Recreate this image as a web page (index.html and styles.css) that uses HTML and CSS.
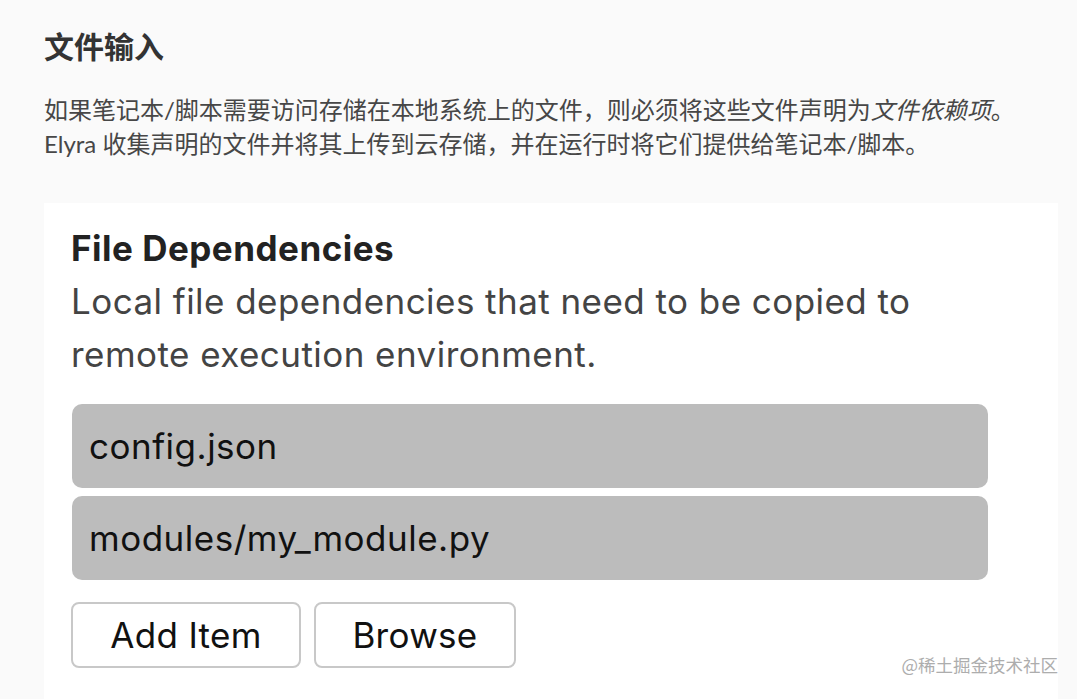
FILE: index.html
```html
<!DOCTYPE html>
<html lang="zh-CN">
<head>
<meta charset="utf-8">
<title>文件输入</title>
<link rel="stylesheet" href="styles.css">
</head>
<body>
<main class="page">
  <h2 class="section-title">文件输入</h2>
  <p class="section-text">如果笔记本/脚本需要访问存储在本地系统上的文件，则必须将这些文件声明为<em>文件依赖项</em>。<br>Elyra 收集声明的文件并将其上传到云存储，并在运行时将它们提供给笔记本/脚本。</p>
  <section class="card">
    <h3 class="card-title">File Dependencies</h3>
    <p class="card-desc">Local file dependencies that need to be copied to remote execution environment.</p>
    <ul class="dep-list">
      <li class="dep-item">config.json</li>
      <li class="dep-item">modules/my_module.py</li>
    </ul>
    <div class="actions">
      <button class="btn btn-add" type="button">Add Item</button>
      <button class="btn btn-browse" type="button">Browse</button>
    </div>
  </section>
  <span class="watermark">@稀土掘金技术社区</span>
</main>
</body>
</html>
```

FILE: styles.css
```css
* { box-sizing: border-box; }

html, body {
  margin: 0;
  padding: 0;
  height: 100%;
  overflow: hidden;
}

body {
  background: #fafafa;
}

.page {
  position: relative;
  min-height: 100vh;
  display: flex;
  flex-direction: column;
  padding: 27px 19px 0 44px;
}

.section-title {
  margin: 0;
  font-family: Lato, "Noto Sans CJK SC", sans-serif;
  font-weight: 700;
  font-size: 30px;
  line-height: 38px;
  color: #333333;
}

.section-text {
  margin: 28px 0 0;
  font-family: Lato, "Noto Sans CJK SC", sans-serif;
  font-size: 24px;
  line-height: 34px;
  color: #474747;
}

.section-text em {
  font-style: italic;
}

.card {
  flex: 1;
  margin-top: 42px;
  background: #ffffff;
  padding: 24px 70px 0 27px;
  font-family: Inter, "Liberation Sans", sans-serif;
}

.card-title {
  margin: 0;
  font-size: 35px;
  line-height: 42px;
  font-weight: 700;
  letter-spacing: 0.5px;
  color: #222222;
}

.card-desc {
  margin: 6px 0 0;
  font-size: 35px;
  line-height: 53px;
  letter-spacing: 0.45px;
  color: #444444;
}

.dep-list {
  list-style: none;
  margin: 23px 0 0 1px;
  padding: 0;
  display: flex;
  flex-direction: column;
  gap: 8px;
}

.dep-item {
  height: 84px;
  line-height: 84px;
  padding-left: 17px;
  border-radius: 10px;
  background: #bcbcbc;
  font-size: 35px;
  letter-spacing: 0.5px;
  color: #111111;
}

.actions {
  margin-top: 22px;
  display: flex;
  gap: 13px;
}

.btn {
  height: 66px;
  padding: 0;
  background: #ffffff;
  border: 2px solid #c8c8c8;
  border-radius: 8px;
  font-family: Inter, "Liberation Sans", sans-serif;
  font-size: 35px;
  letter-spacing: 0.3px;
  color: #111111;
}

.btn-add { width: 230px; }
.btn-browse { width: 202px; }

.watermark {
  position: absolute;
  right: 19px;
  top: 655px;
  font-family: "Noto Sans CJK SC", sans-serif;
  font-size: 17.5px;
  line-height: 20px;
  color: #adadad;
}
```
